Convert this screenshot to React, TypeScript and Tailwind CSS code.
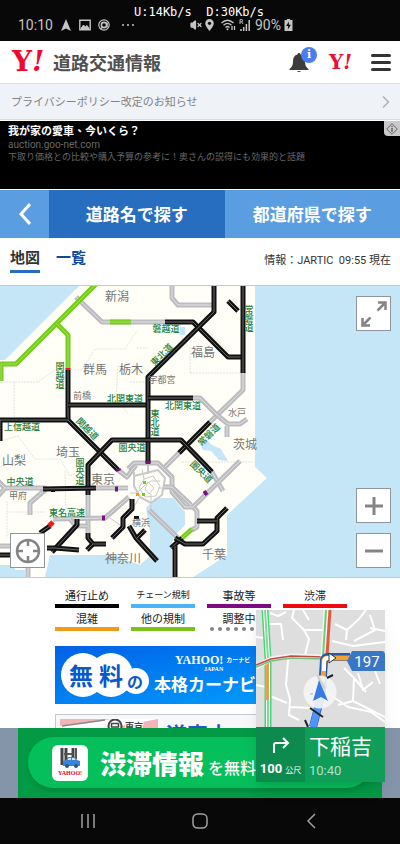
import type { FC, ReactNode } from "react";
import { ChevronRight, VolumeX } from "lucide-react";

type Tone = "black" | "gray" | "green" | "red" | "purple";

const TONES: Record<Tone, { edge: string; core: string }> = {
  black: { edge: "#111111", core: "#6a6a6a" },
  gray: { edge: "#bcbcc0", core: "#e2e2e4" },
  green: { edge: "#78cc1e", core: "#a4dc62" },
  red: { edge: "#ee1c1c", core: "#ee1c1c" },
  purple: { edge: "#7a0f80", core: "#7a0f80" },
};

const ROADS: { tone: Tone; points: string }[] = [
  // expressways without information
  { tone: "gray", points: "76,11 102,36 165,36" },
  { tone: "gray", points: "172,-2 172,12 178,19 213,19" },
  { tone: "gray", points: "243,86 243,104 210,136" },
  { tone: "gray", points: "193,112 200,112 217,129 228,138 240,138 247,133" },
  { tone: "gray", points: "227,140 227,151" },
  { tone: "gray", points: "179,167 165,181" },
  { tone: "gray", points: "212,186 223,205" },
  { tone: "gray", points: "-2,195 5,202 -2,210" },
  { tone: "gray", points: "5,202 45,202 45,204 30,217 30,229" },
  { tone: "gray", points: "96,202 128,202" },
  { tone: "gray", points: "88,209 88,247" },
  { tone: "gray", points: "53,233 105,232 129,211" },
  { tone: "gray", points: "70,233 76,240 88,240" },
  { tone: "gray", points: "-2,260 12,260" },
  { tone: "gray", points: "28,280 28,294" },
  { tone: "gray", points: "118,184 127,191 136,179" },
  { tone: "gray", points: "128,183 134,177 158,177 172,191 172,206 185,221 193,221 197,225 197,241 192,244" },
  { tone: "gray", points: "164,201 172,201 191,219" },
  { tone: "gray", points: "240,175 193,221" },
  { tone: "gray", points: "149,224 178,252" },
  // Hokuriku and upper Kan-etsu
  { tone: "green", points: "97,-3 16,78 1,78 1,95" },
  { tone: "green", points: "56,37 68,49 68,83" },
  { tone: "green", points: "110,36 131,36" },
  { tone: "green", points: "192,243 182,252" },
  // closed sections
  { tone: "black", points: "68,84 68,134 118,184" },
  { tone: "black", points: "68,119 148,119" },
  { tone: "black", points: "68,134 0,134 0,155" },
  { tone: "black", points: "165,36 193,36 228,71 243,71" },
  { tone: "black", points: "214,-2 214,26 148,91 148,177" },
  { tone: "black", points: "243,-2 243,87" },
  { tone: "black", points: "228,15 238,25" },
  { tone: "black", points: "148,112 193,112" },
  { tone: "black", points: "210,136 179,167" },
  { tone: "black", points: "88,209 88,179 112,154 181,154 212,186" },
  { tone: "black", points: "43,203 96,202" },
  { tone: "black", points: "40,247 50,240" },
  { tone: "black", points: "77,233 77,239 52,266" },
  { tone: "black", points: "47,262 55,262 79,264" },
  { tone: "black", points: "88,247 88,252 93,258 106,258" },
  { tone: "black", points: "93,258 87,264" },
  { tone: "black", points: "-2,269 12,269" },
  { tone: "black", points: "132,213 132,223 123,232 123,241 112,252" },
  { tone: "black", points: "129,240 136,252 157,275" },
  { tone: "black", points: "145,244 137,252" },
  { tone: "black", points: "171,262 182,252" },
  { tone: "black", points: "175,252 185,258 203,258 217,245 217,232 227,222" },
  { tone: "black", points: "217,235 197,235" },
  { tone: "black", points: "175,260 175,294" },
  { tone: "red", points: "49,240 53,236" },
  { tone: "red", points: "68,82 68,84" },
  { tone: "purple", points: "115,203 118,203" },
  { tone: "purple", points: "102,232 105,232" },
  { tone: "purple", points: "148,175 148,178" },
  { tone: "purple", points: "204,208 207,206" },
  { tone: "purple", points: "118,183 119,185" },
];

const PLACES = [
  { name: "新潟", x: 117, y: 15, size: 12 },
  { name: "福島", x: 203, y: 71, size: 12 },
  { name: "群馬", x: 95, y: 88, size: 12 },
  { name: "栃木", x: 131, y: 88, size: 12 },
  { name: "茨城", x: 245, y: 163, size: 12 },
  { name: "埼玉", x: 68, y: 171, size: 12 },
  { name: "山梨", x: 14, y: 179, size: 12 },
  { name: "東京", x: 103, y: 198, size: 12 },
  { name: "千葉", x: 214, y: 273, size: 12 },
  { name: "神奈川", x: 123, y: 277, size: 12 },
  { name: "宇都宮", x: 162, y: 97, size: 9 },
  { name: "前橋", x: 82, y: 113, size: 9 },
  { name: "水戸", x: 237, y: 130, size: 9 },
  { name: "甲府", x: 18, y: 213, size: 9 },
  { name: "横浜", x: 141, y: 240, size: 9 },
];

const ROAD_NAMES = [
  { name: "磐越道", x: 166, y: 46, turn: 0 },
  { name: "北関東道", x: 125, y: 116, turn: 0 },
  { name: "北関東道", x: 183, y: 123, turn: 0 },
  { name: "上信越道", x: 22, y: 144, turn: 0 },
  { name: "圏央道", x: 132, y: 165, turn: 0 },
  { name: "中央道", x: 20, y: 199, turn: 0 },
  { name: "東名高速", x: 67, y: 230, turn: 0 },
  { name: "東北道", x: 164, y: 71, turn: -45 },
  { name: "関越道", x: 85, y: 145, turn: 45 },
  { name: "常磐道", x: 211, y: 151, turn: -45 },
  { name: "圏央道", x: 199, y: 188, turn: 45 },
];

const VERTICAL_NAMES = [
  { name: "関越道", x: 60, y: 76 },
  { name: "常磐道", x: 249, y: 19 },
  { name: "東北道", x: 155, y: 123 },
  { name: "圏央道", x: 80, y: 172 },
];

const LEGEND = [
  { label: "通行止め", bar: "bg-black", text: "text-[11px]" },
  { label: "チェーン規制", bar: "bg-[#4bb4f6]", text: "text-[9px]" },
  { label: "事故等", bar: "bg-[#7d0a80]", text: "text-[11px]" },
  { label: "渋滞", bar: "bg-[#ee0a12]", text: "text-[11px]" },
  { label: "混雑", bar: "bg-[#f09a1a]", text: "text-[11px]" },
  { label: "他の規制", bar: "bg-[#7cc21a]", text: "text-[11px]" },
];

const StatusBar: FC = () => (
  <div className="relative h-[41px] shrink-0 bg-[#080808] text-[#c4c4c4]">
    <p className="pt-1 pl-[134px] font-['DejaVu_Sans_Mono',monospace] text-xs leading-4 whitespace-pre text-white">
      {"U:14Kb/s  D:30Kb/s"}
    </p>
    <div className="absolute inset-x-0 top-[17px] flex h-4 items-center justify-between pr-[107px] pl-[18px] font-[Roboto,sans-serif] text-sm">
      <div className="flex items-center gap-[7px]">
        <span>10:10</span>
        <svg className="h-3 w-3" viewBox="0 0 12 12" fill="currentColor">
          <path d="M6 0 11 12 6 9.5 1 12Z" />
        </svg>
        <svg className="h-3 w-3" viewBox="0 0 12 12" fill="none" stroke="currentColor">
          <path d="M.8 1.3H11.2V10.7H.8Z" strokeWidth="1.4" />
          <path d="M2 9.5 4.5 6 6.2 8 8 6.5 10 9.5Z" fill="currentColor" />
        </svg>
        <svg className="h-3 w-3" viewBox="0 0 12 12" fill="none" stroke="currentColor">
          <circle cx="6" cy="6" r="5.2" strokeWidth="1.2" />
          <circle cx="6" cy="6" r="2.6" strokeWidth="1.6" />
          <path d="M9 3.5V8.5M2 10 5 8" strokeWidth="1.5" />
        </svg>
        <svg className="ml-1 h-3 w-4" viewBox="0 0 16 12" fill="currentColor">
          <circle cx="2" cy="6" r="1" />
          <circle cx="7" cy="6" r="1" />
          <circle cx="12" cy="6" r="1" />
        </svg>
      </div>
      <div className="flex items-center gap-[3px]">
        <VolumeX className="h-3 w-3" fill="currentColor" strokeWidth={2.5} />
        <svg className="h-3 w-[9px]" viewBox="0 0 9 12">
          <path d="M4.5 0A4.3 4.3 0 0 0 .2 4.3C.2 7.5 4.5 12 4.5 12S8.8 7.5 8.8 4.3A4.3 4.3 0 0 0 4.5 0Z" fill="currentColor" />
          <circle cx="4.5" cy="4.3" r="1.6" fill="#080808" />
        </svg>
        <svg className="ml-1 h-3 w-[15px]" viewBox="0 0 15 12" fill="none" stroke="currentColor" strokeWidth="1.3">
          <path d="M.5 4Q6.5-1.5 12.5 4M2.5 6.2Q6.5 2.5 10.5 6.2M4.5 8.4Q6.5 6.6 8.5 8.4" />
          <circle cx="6.5" cy="10.3" r="1" fill="currentColor" stroke="none" />
          <path d="M11 7V11M13.5 7V11" />
        </svg>
        <svg className="h-3 w-3" viewBox="0 0 12 12" stroke="currentColor" fill="none">
          <path d="M2 12V10M4.7 12V8M7.4 12V5M10.2 12V1" strokeWidth="1.5" />
          <path d="M1 5V.6H3.2Q4.2 1.8 3.2 2.8H1M2.6 2.8 4 5" strokeWidth=".9" />
        </svg>
        <span className="pl-px">90%</span>
        <svg className="h-3 w-[9px]" viewBox="0 0 9 12" fill="currentColor">
          <path d="M3 0H6V1H8.5V12H.5V1H3Z" />
          <path d="M5 2.5 2 7H4.2L3.8 10.5 7 5.8H4.8Z" fill="#080808" />
        </svg>
      </div>
    </div>
  </div>
);

const Header: FC = () => (
  <header className="flex h-[43px] shrink-0 items-center border-b border-[#d9dce0] bg-white pr-[9px] pl-3">
    <a href="#top" className="flex items-center" aria-label="Yahoo! 道路交通情報">
      <span className="w-[41px] font-['DejaVu_Serif',serif] text-[28px] leading-8 font-bold text-[#f0092f]">
        Y<i>!</i>
      </span>
      <span className="text-lg leading-6 font-bold text-[#505050]">道路交通情報</span>
    </a>
    <div className="ml-auto flex items-center gap-3">
      <button type="button" aria-label="お知らせ" className="relative h-6 w-7">
        <svg className="h-6 w-5" viewBox="0 0 20 24" fill="#3c3c3c">
          <path d="M10 3C10.9 3 11.5 3.6 11.5 4.5C14.5 5.3 16 7.6 16 11C16 15.5 17 17 19.5 19V20H.5V19C3 17 4 15.5 4 11C4 7.6 5.5 5.3 8.5 4.5C8.5 3.6 9.1 3 10 3Z" />
          <path d="M7.8 21H12.2Q10 23.2 7.8 21Z" />
        </svg>
        <span className="absolute -top-[3px] right-0 flex h-4 w-4 items-center justify-center rounded-full bg-[#4a7df0] font-['DejaVu_Serif',serif] text-[11px] font-bold text-white">
          i
        </span>
      </button>
      <a href="#yahoo" aria-label="Yahoo!" className="w-[30px] font-['DejaVu_Serif',serif] text-xl leading-6 font-bold text-[#e8113a]">
        Y<i>!</i>
      </a>
      <button type="button" aria-label="メニュー" className="flex h-[17px] w-5 flex-col justify-between">
        <span className="h-[3px] w-full rounded-full bg-[#333]" />
        <span className="h-[3px] w-full rounded-full bg-[#333]" />
        <span className="h-[3px] w-full rounded-full bg-[#333]" />
      </button>
    </div>
  </header>
);

const MapButton: FC<{ label: string; children: ReactNode }> = ({ label, children }) => (
  <button
    type="button"
    aria-label={label}
    className="flex h-[35px] w-[35px] items-center justify-center border border-[#8f979d] bg-white"
  >
    {children}
  </button>
);

const TrafficMap: FC = () => (
  <div className="relative h-[293px] shrink-0 overflow-hidden border-y border-[#c6cacd] bg-[#c5e6f6]">
    <svg className="h-[291px] w-[400px]" viewBox="0 0 400 291">
      <path d="M79 0H255V181L267 192L227 229V269L193 291H164L162 277L151 267L149 251L146 242V224L155 212L146 224L149 252L152 268L140 279L112 269H50L45 291H25V284H15V279H0V74H5Z" fill="#fffff7" />
      <path d="M146 222 155 212H173L185 226V239L173 251V262L178 291H160L150 262V246Z" fill="#c5e6f6" />
      <path d="M172 291V256L200 225L227 229V269L193 291Z" fill="#fffff7" />
      <path d="M198 155 207 154 212 159 221 163 228 175 219 174 211 165 203 164Z" fill="#c5e6f6" />
      <path d="M180 41H185V49H180Z" fill="#c5e6f6" />
      <g fill="none" stroke="#e4e4e0" strokeWidth="1" strokeDasharray="2 1">
        <path d="M0 96H38L55 84H82L95 63H125L137 45" />
        <path d="M14 96V134M137 62H148M118 80 116 112 128 128M130 96H148M190 87V62L165 30M190 87H243" />
        <path d="M0 155 18 150 35 173H60L70 190L88 180M7 215V252M7 226H45M65 185 66 232M182 176H255" />
      </g>
      <g fill="none" stroke="#cacacd" strokeWidth="1" strokeLinejoin="round">
        <path d="M148 177V188M134 186V200L140 211L151 217L162 209L165 192L158 184L134 190" strokeWidth="2" />
        <path d="M130 207H137L144 200L151 195H160M142 183 144 193 139 202 145 211 156 210 160 200 153 190 144 193" />
        <path d="M148 196 154 202 149 208 145 203ZM151 208 151 222M158 202H170M140 211 133 222M110 232 123 241" />
      </g>
      <path d="M143 195H146V198H143ZM142 207H145V210H142Z" fill="#75c91b" />
      <path d="M136 207H139V210H136Z" fill="#f39a16" />
      {ROADS.map((road) => (
        <g key={road.points} fill="none" strokeLinejoin="round">
          <polyline points={road.points} stroke={TONES[road.tone].edge} strokeWidth="5" />
          <polyline points={road.points} stroke={TONES[road.tone].core} strokeWidth="1" />
        </g>
      ))}
      <path d="M51 204H55V206H51ZM134 230H139V233H134Z" fill="#111" />
      <g textAnchor="middle" fill="#757575">
        {PLACES.map((place) => (
          <text key={place.name} x={place.x} y={place.y} fontSize={place.size}>
            {place.name}
          </text>
        ))}
      </g>
      <g textAnchor="middle" fill="#1f8040" fontSize="9" fontWeight="500">
        {ROAD_NAMES.map((road) => (
          <text key={`${road.name}${road.x}`} x={road.x} y={road.y} transform={`rotate(${road.turn} ${road.x} ${road.y})`}>
            {road.name}
          </text>
        ))}
      </g>
      <g fill="#1f8040" fontSize="9" fontWeight="500" className="[writing-mode:vertical-rl]">
        {VERTICAL_NAMES.map((road) => (
          <text key={road.name} x={road.x} y={road.y}>
            {road.name}
          </text>
        ))}
      </g>
    </svg>
    <div className="absolute top-[10px] right-[9px]">
      <MapButton label="拡大表示">
        <svg className="h-7 w-7" viewBox="0 0 28 28" fill="none" stroke="#858585" strokeWidth="2.5">
          <path d="M17.5 10.5 25 3M18 2.5H25.5V10M10.5 17.5 3 25M2.5 18V25.5H10" />
        </svg>
      </MapButton>
    </div>
    <div className="absolute right-[9px] bottom-[9px] flex flex-col gap-[10px]">
      <MapButton label="ズームイン">
        <svg className="h-[18px] w-[18px]" viewBox="0 0 18 18" stroke="#858585" strokeWidth="3">
          <path d="M0 9H18M9 0V18" />
        </svg>
      </MapButton>
      <MapButton label="ズームアウト">
        <svg className="h-[18px] w-[18px]" viewBox="0 0 18 18" stroke="#858585" strokeWidth="3">
          <path d="M0 9H18" />
        </svg>
      </MapButton>
    </div>
    <div className="absolute bottom-[9px] left-[10px]">
      <MapButton label="現在地">
        <svg className="h-[26px] w-[26px]" viewBox="0 0 26 26" fill="none" stroke="#858585" strokeWidth="2.5">
          <circle cx="13" cy="13" r="11" />
          <path d="M13 1V8M13 18V25M1 13H8M18 13H25" />
        </svg>
      </MapButton>
    </div>
  </div>
);

const Legend: FC = () => (
  <div className="grid shrink-0 grid-cols-4 gap-x-3 gap-y-px pt-2 pr-[53px] pl-[55px]">
    {LEGEND.map((item) => (
      <div key={item.label} className="text-center text-[#222]">
        <p className={`leading-[18px] whitespace-nowrap ${item.text}`}>{item.label}</p>
        <div className={`h-1 ${item.bar}`} />
      </div>
    ))}
    <div className="text-center text-[#222]">
      <p className="text-[11px] leading-[18px]">調整中</p>
      <div className="flex gap-1 pl-[3px]">
        {[0, 1, 2, 3, 4, 5].map((dot) => (
          <span key={dot} className="h-1 w-1 rounded-full bg-[#858585]" />
        ))}
      </div>
    </div>
  </div>
);

const CarNaviBanner: FC = () => (
  <a
    href="#carnavi"
    className="relative mt-[15px] mr-[53px] ml-[55px] flex h-[58px] shrink-0 items-center overflow-hidden bg-gradient-to-br from-[#0560e6] to-[#0da4ff] text-white"
  >
    <svg className="absolute inset-y-0 left-0 h-[58px] w-24" viewBox="0 0 96 58" fill="#fff">
      <circle cx="28" cy="29" r="22" />
      <circle cx="56" cy="29" r="22" />
      <circle cx="81" cy="35" r="13" />
    </svg>
    <span className="relative flex w-[99px] shrink-0 items-center pl-[14px] text-[#0c58c8]">
      <span className="text-2xl leading-8 font-bold">無</span>
      <span className="ml-[6px] text-2xl leading-8 font-bold">料</span>
      <span className="mt-3 ml-1 text-base leading-5 font-bold">の</span>
    </span>
    <span className="relative shrink-0 leading-none">
      <span className="flex items-start gap-[3px] pl-[21px]">
        <span className="flex flex-col items-end font-['Liberation_Serif',serif] font-bold">
          <span className="text-xs leading-3">YAHOO!</span>
          <span className="text-[6px] leading-[6px]">JAPAN</span>
        </span>
        <span className="text-[6px] leading-3 font-bold">カーナビ</span>
      </span>
      <span className="block text-[17px] leading-6 font-bold">本格カーナビ</span>
    </span>
  </a>
);

const RouteBanner: FC = () => (
  <a
    href="#route"
    className="mt-[10px] mr-[53px] ml-[55px] flex h-[58px] shrink-0 border border-[#c4cbce] bg-[#f8f8fa] pt-1 pl-1"
  >
    <svg className="h-[50px] w-[98px]" viewBox="0 0 98 50">
      <path d="M0 0H98V50H0Z" fill="#f4b4b6" />
      <path d="M0 7 52 0H98L50 9L0 12Z" fill="#fff" />
      <path d="M2 7 45 1" stroke="#8b8888" strokeWidth="1.5" />
      <circle cx="55" cy="7" r="6.5" fill="#fff" stroke="#444" strokeWidth="2" />
      <path d="M51.5 4.5H58.5V8H51.5Z" fill="none" stroke="#444" strokeWidth="1.5" />
      <text x="65" y="11" fontSize="9" fontWeight="700" fill="#444" stroke="#fff" strokeWidth="2" paintOrder="stroke">東京</text>
    </svg>
    <span className="pl-2 text-[21px] leading-7 font-bold whitespace-nowrap text-[#2459c9]">道案内</span>
  </a>
);

const BottomAd: FC = () => (
  <div className="shrink-0 bg-[#8494a9] px-[18px]">
    <div className="h-[70px] bg-[#039a46] px-[10px] pt-[9px]">
      <a href="#app" className="flex h-[51px] items-center overflow-hidden rounded-full bg-[#05bf5b] pl-6 whitespace-nowrap text-white shadow-md">
        <span className="flex h-9 w-9 shrink-0 flex-col items-center rounded-md bg-white pt-[2px]">
          <svg className="h-[22px] w-6" viewBox="0 0 24 22">
            <path d="M4 1V18M8 1V17M15 1V14" stroke="#444" strokeWidth="3" />
            <path d="M6 7H15M18 1V12" stroke="#555" strokeWidth="2" />
            <path d="M5 17V14L8 13 10 10H17L19 13 22 14V19H5Z" fill="#3784d8" />
            <path d="M10.5 11H13V13H9.5ZM14 11H16.5L17.5 13H14Z" fill="#c8e6ff" />
            <circle cx="9" cy="19" r="2" fill="#285588" />
            <circle cx="18" cy="19" r="2" fill="#285588" />
          </svg>
          <span className="font-['Liberation_Serif',serif] text-[6px] leading-[8px] font-bold text-[#e6002d]">YAHOO!</span>
        </span>
        <span className="ml-3 text-[26px] leading-9 font-black">渋滞情報</span>
        <span className="mt-2 ml-1 text-base leading-6 font-medium">を無料</span>
      </a>
    </div>
  </div>
);

const NavigationOverlay: FC = () => (
  <aside className="absolute right-[15px] bottom-[62px] w-[129px] shadow-lg">
    <svg className="block h-[117px] w-[129px] font-[Roboto,sans-serif]" viewBox="0 0 129 117">
      <path d="M0 0H129V117H0Z" fill="#dedede" />
      <g fill="none" stroke="#fff" strokeWidth="2" strokeLinejoin="round">
        <path d="M12 14H25L27 30M14 3 22 6 30 2M38 0 36 8 48 20 53 29 49 45M48 20H69M47 0 53 10M32 50 30 75 34 89 33 105 43 110M14 86 31 93M34 97 55 98" />
        <path d="M79 14 91 20 90 30M91 20 103 9 110 0M98 31 119 20 114 5M114 18 129 21M76 31 97 36 129 32M82 95 97 91 98 68 88 58M97 91 129 107M98 68 110 82M102 63 107 80 117 72M67 80 92 97 115 102 129 112M0 27 8 28M0 75 10 77M119 61 124 74" />
      </g>
      <g fill="none">
        <path d="M9 0 12 48V117" stroke="#4bd479" strokeWidth="7" />
        <path d="M9 0 12 48V117" stroke="#fff" strokeWidth="4" />
        <path d="M9 0 12 48V117" stroke="#82d899" strokeWidth="2" />
        <path d="M11 48V90" stroke="#ee9b52" strokeWidth="4" />
        <path d="M0 57 15 49 35 46 68 47" stroke="#f2f2f2" strokeWidth="5" />
        <path d="M0 57 15 51 35 48 68 49" stroke="#6dc47c" strokeWidth="1.5" />
        <path d="M0 55 15 49 35 46 68 47" stroke="#c24b45" strokeWidth="1.5" />
        <path d="M71 0 68 47" stroke="#f2f2f2" strokeWidth="7" />
        <path d="M70 0 67 47" stroke="#6fce75" strokeWidth="2" />
        <path d="M74 0 71 45" stroke="#e4583d" strokeWidth="3" />
        <path d="M57 117 66 82 68 50Q69 47 72 47H94" stroke="#2459ad" strokeWidth="8" />
        <path d="M67 72 68 50Q69 48 72 48H94" stroke="#f4a033" strokeWidth="5" />
        <path d="M57 117 65 84" stroke="#4f94fa" strokeWidth="7" />
        <path d="M68 61V53Q68 48 72 48H75" stroke="#fff" strokeWidth="4" />
      </g>
      <path d="M73 43 80 48 73 53Z" fill="#fff" stroke="#234" strokeWidth="1" />
      <circle cx="64" cy="82" r="16.5" fill="#f5f5f5" fillOpacity=".9" />
      <path d="M61 65 69 79M54 84H57" stroke="#d0d0d0" strokeWidth="2" />
      <path d="M63 70 72 91 65 87 57 91Z" fill="#397be5" />
      <path d="M54 98 67 107M71 68 77 65M49 110 52 117" stroke="#222" strokeWidth="2" />
      <path d="M91 51 96 41H126Q129 41 129 45V61H96Z" fill="#3977c6" />
      <text x="111" y="57" textAnchor="middle" fontSize="15" fill="#fff">197</text>
    </svg>
    <div className="flex h-[55px] text-white">
      <div className="flex w-[49px] flex-col items-center justify-between bg-[#0d8b4f] pt-[9px] pb-[2px]">
        <svg className="h-[18px] w-[18px]" viewBox="0 0 18 18" fill="none" stroke="#fff" strokeWidth="2">
          <path d="M2 17V9Q2 7 4 7H16M11 2 16 7 11 12" />
        </svg>
        <p className="flex items-baseline gap-[3px] whitespace-nowrap">
          <b className="font-[Roboto,sans-serif] text-[13px] leading-5">100</b>
          <span className="text-[8px] leading-5">公尺</span>
        </p>
      </div>
      <div className="min-w-0 flex-1 bg-[#0f9d58] pt-1 pl-1">
        <p className="text-[21px] leading-7">下稲吉</p>
        <p className="font-[Roboto,sans-serif] text-[13px] leading-6 text-[#b2e0c8]">10:40</p>
      </div>
    </div>
  </aside>
);

const SystemNav: FC = () => (
  <nav className="grid h-[46px] shrink-0 grid-cols-3 items-center bg-[#080808] px-8 text-[#a0a0a0]">
    <button type="button" aria-label="履歴" className="flex justify-center">
      <svg className="h-4 w-4" viewBox="0 0 16 16" stroke="currentColor" strokeWidth="1.5">
        <path d="M2 1V15M8 1V15M14 1V15" />
      </svg>
    </button>
    <button type="button" aria-label="ホーム" className="flex justify-center">
      <svg className="h-4 w-4" viewBox="0 0 16 16" fill="none" stroke="currentColor" strokeWidth="1.5">
        <rect x="1" y="1" width="14" height="14" rx="4.5" />
      </svg>
    </button>
    <button type="button" aria-label="戻る" className="flex justify-center">
      <svg className="h-4 w-4" viewBox="0 0 16 16" fill="none" stroke="currentColor" strokeWidth="1.5">
        <path d="M11 1 4 8 11 15" />
      </svg>
    </button>
  </nav>
);

export default function App() {
  return (
    <div className="relative flex h-screen flex-col overflow-hidden bg-white font-['Noto_Sans_CJK_JP',sans-serif]">
      <StatusBar />
      <main className="flex min-h-0 flex-1 flex-col overflow-hidden">
        <Header />
        <a
          href="#privacy"
          className="flex h-9 shrink-0 items-center justify-between border-b border-[#d9dce0] bg-[#eff2f6] pr-1 pl-[11px] text-[11px] text-[#838383]"
        >
          プライバシーポリシー改定のお知らせ
          <ChevronRight className="h-5 w-5 text-[#b0b3b7]" strokeWidth={2} />
        </a>
        <a
          href="#ad"
          className="relative mt-px h-[68px] shrink-0 bg-black pt-1 pl-2 font-[Roboto,'Noto_Sans_CJK_TC',sans-serif]"
        >
          <p className="text-[11px] leading-[14px] font-bold text-white">我が家の愛車、今いくら？</p>
          <p className="text-[10px] leading-3 text-[#686868]">auction.goo-net.com</p>
          <p className="text-[9px] leading-3 text-[#686868]">下取り価格との比較や購入予算の参考に！奥さんの説得にも効果的と話題</p>
          <span className="absolute top-0 right-0 flex h-[15px] w-4 items-center justify-center rounded-bl bg-[#c9c9c9]">
            <svg className="h-3 w-3" viewBox="0 0 12 12" fill="none" stroke="#666">
              <path d="M6 .7 11.3 6 6 11.3.7 6Z" />
              <path d="M6 5V9M6 3V4" strokeWidth="1.5" />
            </svg>
          </span>
        </a>
        <nav className="mt-px flex h-12 shrink-0 items-center bg-[#5a9de1] text-[17px] font-bold text-white">
          <button type="button" aria-label="戻る" className="flex w-[49px] justify-center">
            <svg className="h-[22px] w-3" viewBox="0 0 12 22" fill="none" stroke="currentColor" strokeWidth="3">
              <path d="M11 1 2 11 11 21" />
            </svg>
          </button>
          <a href="#road" className="flex h-full flex-1 items-center justify-center bg-[#276ec1]">
            道路名で探す
          </a>
          <a href="#prefecture" className="flex h-full flex-1 items-center justify-center">
            都道府県で探す
          </a>
        </nav>
        <div className="flex h-[47px] shrink-0 items-start justify-between pt-[6px] pr-[9px] pl-[10px]">
          <div className="flex gap-4 text-[15px] leading-[26px] font-bold">
            <a href="#map" className="border-b-3 border-[#276ec1] text-[#333]">
              地図
            </a>
            <a href="#list" className="text-[#12489a]">
              一覧
            </a>
          </div>
          <p className="pt-2 font-[Roboto,'Noto_Sans_CJK_JP',sans-serif] text-[11px] leading-[18px] whitespace-pre text-[#333]">
            {"情報：JARTIC  09:55 現在"}
          </p>
        </div>
        <TrafficMap />
        <Legend />
        <CarNaviBanner />
        <RouteBanner />
      </main>
      <BottomAd />
      <SystemNav />
      <NavigationOverlay />
    </div>
  );
}
